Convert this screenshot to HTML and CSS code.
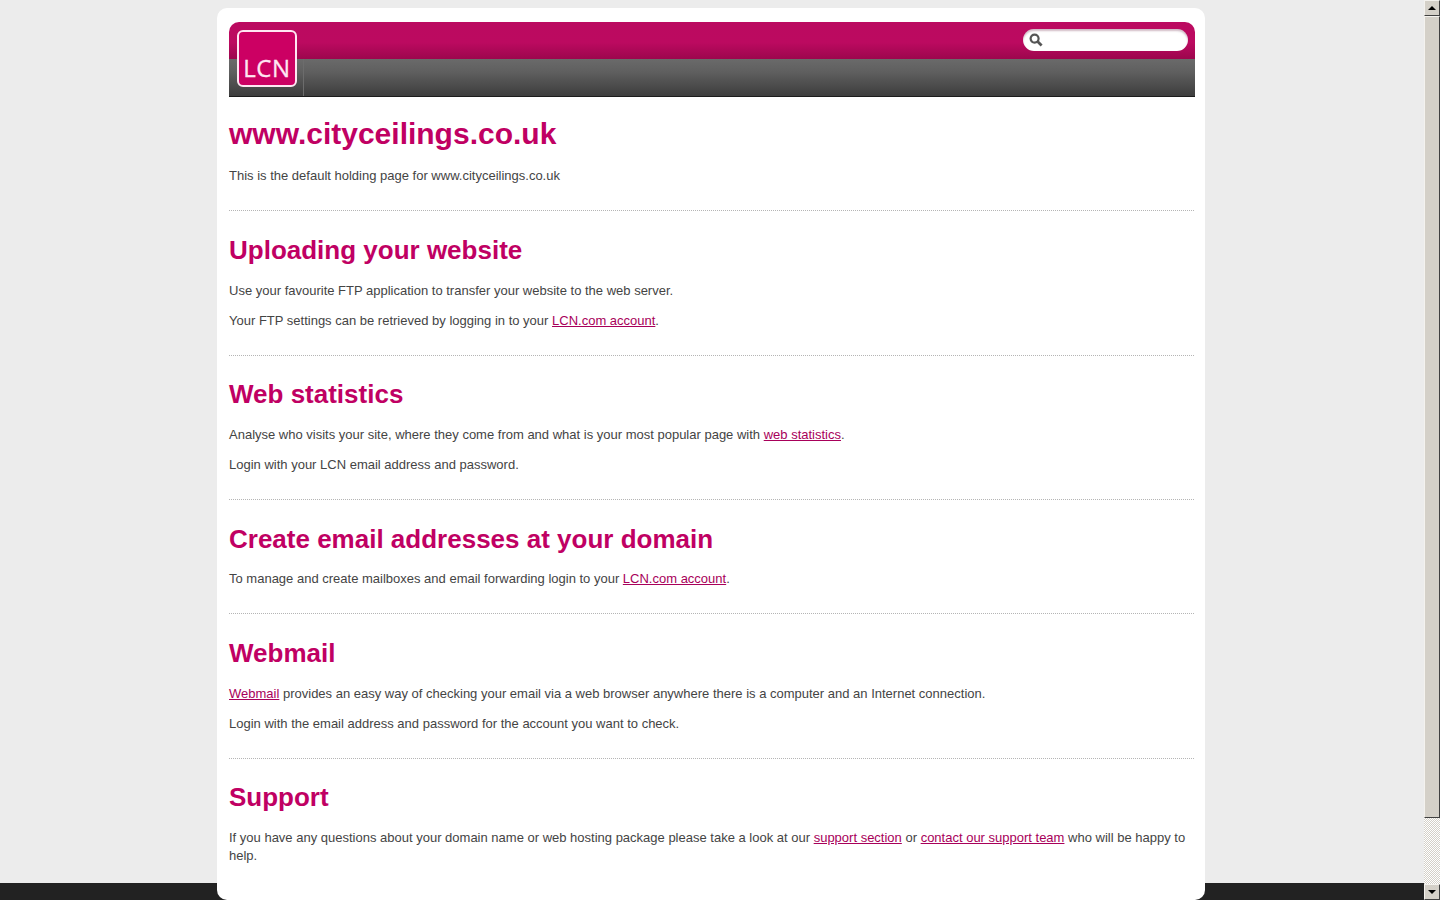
FILE: index.html
```html
<!DOCTYPE html>
<html lang="en">
<head>
  <meta charset="UTF-8">
  <meta name="viewport" content="width=device-width, initial-scale=1.0">
  <title>www.cityceilings.co.uk</title>
  <link rel="stylesheet" href="styles.css">
</head>
<body>
  <div class="viewport">
    <div class="footer-band"></div>
    <div class="page">
      <div class="header">
        <div class="header-top">
          <div class="search">
            <svg class="search-icon" viewBox="0 0 14 14" xmlns="http://www.w3.org/2000/svg">
              <circle cx="5.6" cy="5.6" r="4" stroke="#555" stroke-width="2.2" fill="none"/>
              <path d="M8.6 8.6l4 4" stroke="#555" stroke-width="2.8" fill="none"/>
            </svg>
          </div>
        </div>
        <div class="header-nav">
          <div class="nav-slot"></div>
        </div>
        <div class="logo">LCN</div>
      </div>

      <div class="section section-first">
        <h1>www.cityceilings.co.uk</h1>
        <p>This is the default holding page for www.cityceilings.co.uk</p>
      </div>

      <div class="section">
        <h2>Uploading your website</h2>
        <p>Use your favourite FTP application to transfer your website to the web server.</p>
        <p>Your FTP settings can be retrieved by logging in to your <a href="#">LCN.com account</a>.</p>
      </div>

      <div class="section">
        <h2>Web statistics</h2>
        <p>Analyse who visits your site, where they come from and what is your most popular page with <a href="#">web statistics</a>.</p>
        <p>Login with your LCN email address and password.</p>
      </div>

      <div class="section">
        <h2>Create email addresses at your domain</h2>
        <p>To manage and create mailboxes and email forwarding login to your <a href="#">LCN.com account</a>.</p>
      </div>

      <div class="section">
        <h2>Webmail</h2>
        <p><a href="#">Webmail</a> provides an easy way of checking your email via a web browser anywhere there is a computer and an Internet connection.</p>
        <p>Login with the email address and password for the account you want to check.</p>
      </div>

      <div class="section">
        <h2>Support</h2>
        <p>If you have any questions about your domain name or web hosting package please take a look at our <a href="#">support section</a> or <a href="#">contact our support team</a> who will be happy to help.</p>
      </div>
    </div>
  </div>

  <div class="scrollbar">
    <div class="scroll-button"><div class="arrow-up"></div></div>
    <div class="scroll-thumb"></div>
    <div class="scroll-track"></div>
    <div class="scroll-button"><div class="arrow-down"></div></div>
  </div>
</body>
</html>
```

FILE: styles.css
```css
body, html {
  margin: 0;
  padding: 0;
  width: 100%;
  height: 100%;
  overflow: hidden;
  font-family: "Liberation Sans", Arial, sans-serif;
  background-color: #ececec;
}

body {
  display: flex;
}

.viewport {
  position: relative;
  flex: 1;
  height: 100%;
  overflow: hidden;
}

.footer-band {
  position: absolute;
  left: 0;
  right: 0;
  bottom: 0;
  height: 17px;
  background-color: #222222;
}

.page {
  position: relative;
  width: 966px;
  height: 878px;
  margin: 8px 0 0 217px;
  padding: 14px 10px 0 12px;
  background-color: #ffffff;
  border-radius: 10px;
}

/* Header */
.header {
  position: relative;
  width: 966px;
}

.header-top {
  display: flex;
  justify-content: flex-end;
  align-items: flex-start;
  height: 37px;
  padding: 7px 7px 0 0;
  box-sizing: border-box;
  border-radius: 10px 10px 0 0;
  background: linear-gradient(to bottom, #bb0a60 0%, #bc0a60 55%, #9c064d 100%);
}

.search {
  display: flex;
  align-items: center;
  width: 165px;
  height: 22px;
  padding-left: 6px;
  box-sizing: border-box;
  background-color: #ffffff;
  border-radius: 11px;
  box-shadow: inset 0 2px 2px rgba(120, 60, 90, 0.35);
}

.search-icon {
  width: 14px;
  height: 14px;
}

.header-nav {
  height: 37px;
  border-bottom: 1px solid #1c1c1c;
  background: linear-gradient(to bottom, #6a6a6a 0%, #5f5f5f 35%, #3d3d3d 100%);
}

.nav-slot {
  width: 74px;
  height: 37px;
  border-right: 1px solid #6c6c6c;
}

.logo {
  position: absolute;
  top: 8px;
  left: 8px;
  display: flex;
  align-items: flex-end;
  justify-content: center;
  width: 56px;
  height: 53px;
  border: 2px solid #ffe6f2;
  border-radius: 6px;
  background-color: #cc0063;
  color: #ffe6f2;
  font-family: "Open Sans", sans-serif;
  font-size: 24px;
  line-height: 35px;
  letter-spacing: 0.6px;
  -webkit-text-stroke: 0.3px #ffe6f2;
}

/* Content */
.section {
  width: 965px;
  padding: 23.7px 0 25px;
  border-top: 1px dotted #b5b5b5;
}

.section-first {
  padding: 20px 0 25.2px;
  border-top: 0;
}

h1, h2 {
  margin: 0 0 15.3px;
  color: #c00063;
  font-weight: bold;
}

h1 {
  font-size: 30px;
  line-height: 34px;
  margin-bottom: 16px;
}

h2 {
  font-size: 26px;
  line-height: 31.4px;
}

p {
  margin: 0 0 12px;
  color: #444444;
  font-size: 13px;
  line-height: 18px;
}

p:last-child {
  margin-bottom: 0;
}

a {
  color: #a8005a;
}

/* Window scrollbar */
.scrollbar {
  display: flex;
  flex-direction: column;
  flex: 0 0 16px;
  width: 16px;
  height: 100%;
}

.scroll-button {
  display: flex;
  align-items: center;
  justify-content: center;
  flex: 0 0 16px;
  box-sizing: border-box;
  background-color: #d4d0c8;
  border: 1px solid;
  border-color: #f4f2ee #404040 #404040 #f4f2ee;
}

.arrow-up {
  border: 4px solid transparent;
  border-top: 0;
  border-bottom: 4px solid #000000;
}

.arrow-down {
  border: 4px solid transparent;
  border-bottom: 0;
  border-top: 4px solid #000000;
}

.scroll-thumb {
  flex: 0 0 802px;
  box-sizing: border-box;
  background-color: #d4d0c8;
  border: 1px solid;
  border-color: #f4f2ee #404040 #404040 #f4f2ee;
}

.scroll-track {
  flex: 1;
  background-color: #ffffff;
  background-image: conic-gradient(#d4d0c8 25%, #ffffff 0 50%, #d4d0c8 0 75%, #ffffff 0);
  background-size: 2px 2px;
}
```
